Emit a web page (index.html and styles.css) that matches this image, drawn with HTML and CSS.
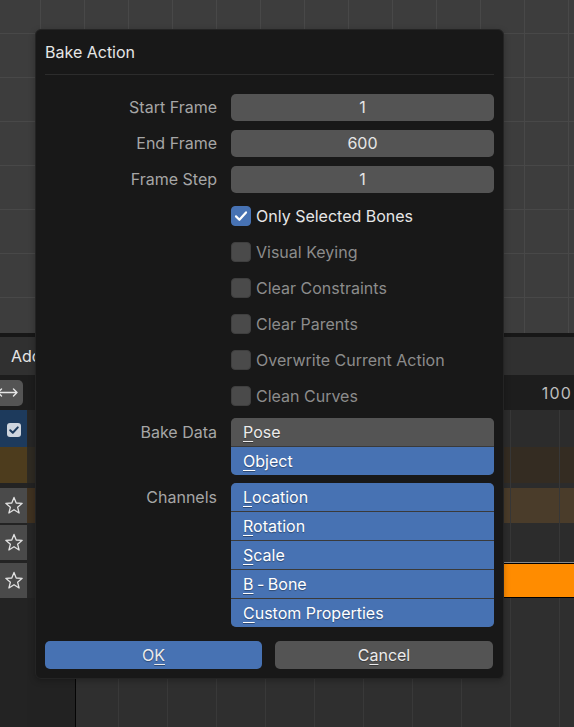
FILE: index.html
```html
<!DOCTYPE html>
<html>
<head>
<meta charset="utf-8">
<link rel="stylesheet" href="styles.css">
</head>
<body>
<div class="screen">
  <div class="graph"></div>
  <div class="area-gap"></div>
  <div class="header"><span>Add</span></div>
  <div class="scrub">
    <div class="swap-btn">
      <svg width="23" height="25" viewBox="0 0 23 25"><path d="M-2 12.5H17M13.5 9L17 12.5L13.5 16M1.5 9L-2 12.5L1.5 16" fill="none" stroke="#e6e6e6" stroke-width="1.4" stroke-linecap="round" stroke-linejoin="round"/></svg>
    </div>
    <span class="frame-num">100</span>
  </div>
  <div class="body">
    <div class="col channels">
      <div class="row r-summary ch-summary"><span class="ch-check"><svg width="14" height="14" viewBox="0 0 14 14"><path d="M3.2 7.2L5.8 9.8L10.8 4.4" fill="none" stroke="#1d3a5c" stroke-width="2" stroke-linecap="round" stroke-linejoin="round"/></svg></span></div>
      <div class="row r-object ch-object"></div>
      <div class="row g5"></div>
      <div class="row r-a ch-star"><svg class="star" width="20" height="20" viewBox="-10 -10 20 20"><polygon points="0,-8.6 2.2,-3 8.2,-2.7 3.6,1.2 5.1,7 0,3.7 -5.1,7 -3.6,1.2 -8.2,-2.7 -2.2,-3" fill="none" stroke="#e2e2e2" stroke-width="1.3" stroke-linejoin="round"/></svg></div>
      <div class="row g2"></div>
      <div class="row r-b ch-star"><svg class="star" width="20" height="20" viewBox="-10 -10 20 20"><polygon points="0,-8.6 2.2,-3 8.2,-2.7 3.6,1.2 5.1,7 0,3.7 -5.1,7 -3.6,1.2 -8.2,-2.7 -2.2,-3" fill="none" stroke="#e2e2e2" stroke-width="1.3" stroke-linejoin="round"/></svg></div>
      <div class="row g3"></div>
      <div class="row r-c ch-star"><svg class="star" width="20" height="20" viewBox="-10 -10 20 20"><polygon points="0,-8.6 2.2,-3 8.2,-2.7 3.6,1.2 5.1,7 0,3.7 -5.1,7 -3.6,1.2 -8.2,-2.7 -2.2,-3" fill="none" stroke="#e2e2e2" stroke-width="1.3" stroke-linejoin="round"/></svg></div>
    </div>
    <div class="col pre">
      <div class="row r-summary"></div>
      <div class="row r-object pre-object"></div>
      <div class="row g5 pre-gap"></div>
      <div class="row r-a pre-a"></div>
      <div class="row g2"></div>
      <div class="row r-b"></div>
      <div class="row g3"></div>
      <div class="row r-c"></div>
    </div>
    <div class="frame-line"></div>
    <div class="col range">
      <div class="row r-summary tl"></div>
      <div class="row r-object tl tl-object"></div>
      <div class="row g5 tl"></div>
      <div class="row r-a tl tl-a"></div>
      <div class="row g2 tl"></div>
      <div class="row r-b tl"></div>
      <div class="row g3 tl tl-before-strip"></div>
      <div class="row r-c tl"><div class="strip"></div></div>
      <div class="tl tl-rest"></div>
    </div>
  </div>
</div>

<div class="dialog">
  <div class="title">Bake Action</div>
  <div class="sep"></div>
  <div class="form">
    <div class="frow"><div class="label">Start Frame</div><div class="field">1</div></div>
    <div class="frow"><div class="label">End Frame</div><div class="field">600</div></div>
    <div class="frow"><div class="label">Frame Step</div><div class="field">1</div></div>
    <div class="frow"><div class="label"></div><div class="check on"><span class="box"><svg width="20" height="20" viewBox="0 0 20 20"><path d="M5 10.4L8.4 13.8L15 6.4" fill="none" stroke="#fff" stroke-width="2.2" stroke-linecap="round" stroke-linejoin="round"/></svg></span><span class="ctext">Only Selected Bones</span></div></div>
    <div class="frow"><div class="label"></div><div class="check"><span class="box"></span><span class="ctext">Visual Keying</span></div></div>
    <div class="frow"><div class="label"></div><div class="check"><span class="box"></span><span class="ctext">Clear Constraints</span></div></div>
    <div class="frow"><div class="label"></div><div class="check"><span class="box"></span><span class="ctext">Clear Parents</span></div></div>
    <div class="frow"><div class="label"></div><div class="check"><span class="box"></span><span class="ctext">Overwrite Current Action</span></div></div>
    <div class="frow"><div class="label"></div><div class="check"><span class="box"></span><span class="ctext">Clean Curves</span></div></div>
    <div class="frow enum-row"><div class="label">Bake Data</div>
      <div class="enum">
        <div class="opt"><u>P</u>ose</div>
        <div class="opt sel"><u>O</u>bject</div>
      </div>
    </div>
    <div class="frow enum-row second-enum"><div class="label">Channels</div>
      <div class="enum">
        <div class="opt sel"><u>L</u>ocation</div>
        <div class="opt sel"><u>R</u>otation</div>
        <div class="opt sel"><u>S</u>cale</div>
        <div class="opt sel"><u>B</u><span class="tight"> - </span>Bone</div>
        <div class="opt sel"><u>C</u>ustom Properties</div>
      </div>
    </div>
  </div>
  <div class="buttons">
    <div class="btn ok">O<u>K</u></div>
    <div class="btn cancel">C<u>a</u>ncel</div>
  </div>
</div>
</body>
</html>
```

FILE: styles.css
```css
* { box-sizing: border-box; }
html, body {
  margin: 0;
  padding: 0;
  width: 574px;
  height: 727px;
  overflow: hidden;
  background: #3d3d3d;
  font-family: Inter, "Noto Sans", sans-serif;
  font-size: 16px;
}
.screen { width: 574px; height: 727px; display: flex; flex-direction: column; }

.graph {
  height: 333px;
  background-color: #3d3d3d;
  background-image:
    linear-gradient(to right, #484848 1px, transparent 1px),
    linear-gradient(to bottom, #484848 1px, transparent 1px);
  background-size: 44px 44px;
  background-position: 40px 33px;
}
.area-gap { height: 4px; background: #171717; }
.header {
  height: 38px;
  background: #303030;
  display: flex;
  align-items: center;
  padding-left: 11px;
  color: #e6e6e6;
}
.scrub {
  height: 35px;
  background: #1d1d1d;
  display: flex;
  align-items: center;
}
.swap-btn {
  width: 23px;
  height: 26px;
  background: #545454;
  border-radius: 0 5px 5px 0;
  display: flex;
  align-items: center;
  overflow: hidden;
}
.swap-btn svg { display: block; }
.frame-num {
  margin-left: auto;
  margin-right: 2px;
  color: #bdbdbd;
  letter-spacing: 1.2px;
}

.body { display: flex; flex: 1; }
.col { display: flex; flex-direction: column; }
.channels { width: 27px; background: #232323; }
.pre { width: 48px; background: #222222; }
.frame-line { width: 1px; background: #050505; }
.range { flex: 1; background: #2d2d2d; }

.row { flex: none; }
.r-summary { height: 37px; }
.r-object { height: 36px; }
.g5 { height: 5px; }
.g2 { height: 2px; }
.g3 { height: 3px; }
.r-a, .r-b, .r-c { height: 35px; }

.ch-summary { background: #1d3a5c; display: flex; align-items: center; padding-left: 7px; padding-top: 3px; }
.ch-check {
  width: 14px; height: 14px;
  background: #cfd5de;
  border-radius: 3px;
  display: block;
}
.ch-check svg { display: block; }
.ch-object { background: #4d3c1d; }
.ch-star { background: #4a4a4a; display: flex; align-items: center; justify-content: center; }
.star { display: block; }

.pre .r-summary, .pre .r-b, .pre .r-c, .pre .g2, .pre .g3 { background: #262626; }
.pre-object { background: #2e2a22; }
.pre-gap { background: #222222; }
.pre-a { background: #3f3120; }

.tl {
  background-color: #2c2c2c;
  background-image: linear-gradient(to right, #373737 1px, transparent 1px);
  background-size: 49px 100%;
  background-position: 42px 0;
}
.tl-object { background-color: #342c22; }
.tl-a { background-color: #4a3c2a; }
.tl-before-strip { box-shadow: inset 0 -1px 0 #8a8a8a; }
.r-c.tl { display: flex; }
.strip {
  margin-left: 300px;
  flex: 1;
  background: #ff8c00;
  border-top: 1px solid #000;
  border-bottom: 1px solid #000;
}
.tl-rest { flex: 1; background-color: #2f2f2f; background-image: linear-gradient(to right, #393939 1px, transparent 1px); }

/* dialog */
.dialog {
  position: absolute;
  left: 35px;
  top: 29px;
  width: 469px;
  height: 650px;
  background: #181818;
  border: 1px solid #242424;
  border-radius: 6px;
  padding: 11px 9px 9px 9px;
  display: flex;
  flex-direction: column;
  box-shadow: 0 2px 6px rgba(0,0,0,0.25);
}
.title {
  height: 22px;
  line-height: 22px;
  color: #e6e6e6;
}
.sep {
  height: 1px;
  background: #2c2c2c;
  margin: 11px 0 0 0;
}
.form {
  margin-top: 19px;
  display: flex;
  flex-direction: column;
  gap: 9px;
}
.frow {
  display: grid;
  grid-template-columns: 172px 263px;
  column-gap: 14px;
  align-items: start;
}
.label {
  text-align: right;
  color: #a6a6a6;
  line-height: 27px;
  height: 27px;
}
.enum-row .label { line-height: 28px; height: 28px; }
.field {
  height: 27px;
  line-height: 27px;
  background: #545454;
  border-radius: 5px;
  color: #e6e6e6;
  text-align: center;
}
.check {
  height: 27px;
  display: flex;
  align-items: center;
  gap: 5px;
}
.box {
  width: 20px;
  height: 20px;
  border-radius: 4px;
  background: #4a4a4a;
  border: 1px solid #3f3f3f;
  display: block;
}
.box svg { display: block; margin: -1px; }
.check.on .box { background: #4772b3; border-color: #4772b3; }
.ctext { color: #8c8c8c; }
.check.on .ctext { color: #e6e6e6; }

.second-enum { margin-top: -1px; }
.enum {
  border-radius: 5px;
  overflow: hidden;
  display: flex;
  flex-direction: column;
  gap: 1px;
  background: #3a3a3a;
}
.opt {
  height: 28px;
  line-height: 28px;
  padding-left: 12px;
  background: #545454;
  color: #ececec;
  text-shadow: 0 1px 1px rgba(0,0,0,0.35);
}
.opt.sel { background: #4772b3; color: #ffffff; }
.tight { word-spacing: -1px; }
u { text-decoration-thickness: 1px; text-underline-offset: 3px; }

.buttons {
  margin-top: auto;
  display: grid;
  grid-template-columns: 217px 218px;
  column-gap: 13px;
}
.btn {
  height: 28px;
  line-height: 28px;
  text-align: center;
  border-radius: 5px;
  color: #ececec;
  text-shadow: 0 1px 1px rgba(0,0,0,0.35);
}
.btn.ok { background: #4772b3; }
.btn.cancel { background: #545454; }
```
